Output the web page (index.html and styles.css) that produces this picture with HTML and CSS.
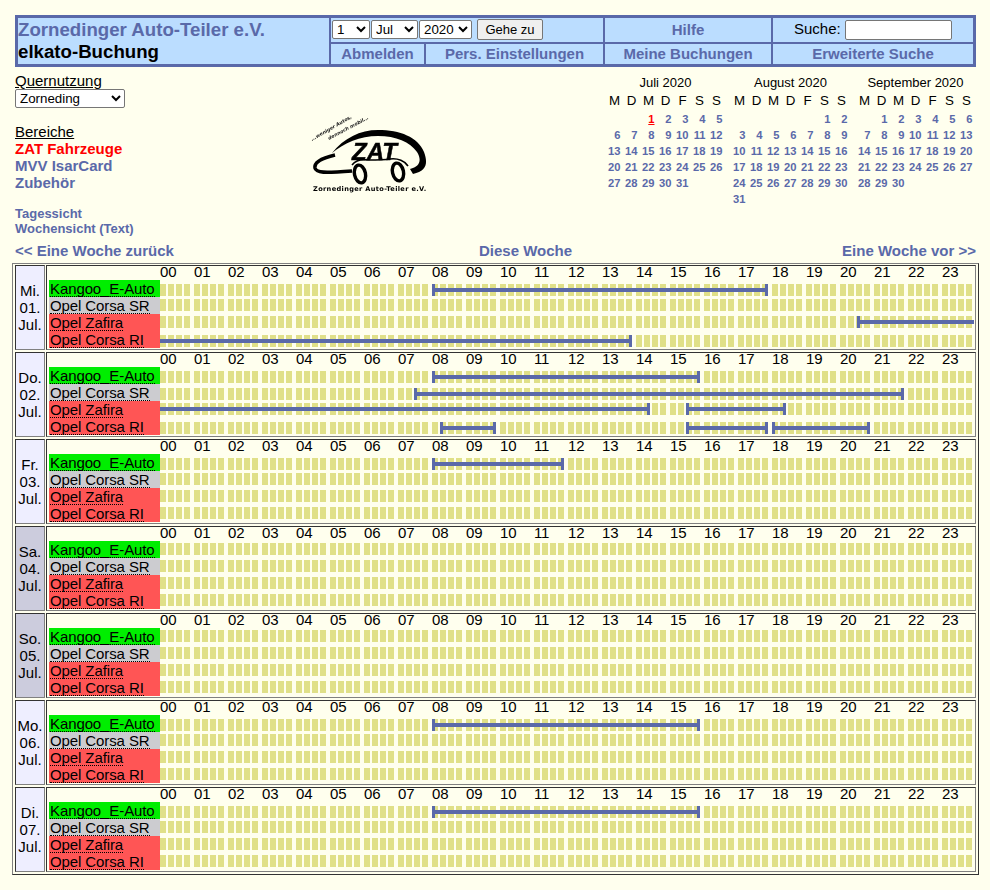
FILE: index.html
```html
<!DOCTYPE html>
<html lang="de">
<head>
<meta charset="utf-8">
<title>elkato-Buchung</title>
<link rel="stylesheet" href="styles.css">
</head>
<body>
<header class="head">
  <div class="brand"><div class="org">Zornedinger Auto-Teiler e.V.</div><div class="app">elkato-Buchung</div></div>
  <form class="goto">
    <select class="sel-d"><option>1</option></select>
    <select class="sel-m"><option>Jul</option></select>
    <select class="sel-y"><option>2020</option></select>
    <button type="button" class="go">Gehe zu</button>
  </form>
  <a class="hl hl-top">Hilfe</a>
  <div class="search"><label>Suche:</label><input type="text" class="q"></div>
  <a class="hl">Abmelden</a>
  <a class="hl">Pers. Einstellungen</a>
  <a class="hl">Meine Buchungen</a>
  <a class="hl">Erweiterte Suche</a>
</header>

<section class="top">
  <div class="side">
    <div class="cap">Quernutzung</div>
    <select class="sel-q"><option>Zorneding</option></select>
    <div class="cap cap-b">Bereiche</div>
    <div class="area active">ZAT Fahrzeuge</div>
    <div class="area">MVV IsarCard</div>
    <div class="area">Zubehör</div>
    <div class="view view-first">Tagessicht</div>
    <div class="view">Wochensicht (Text)</div>
  </div>
  <svg class="logo" viewBox="0 0 120 82" width="120" height="82" aria-label="ZAT Logo">
    <text class="tag" transform="translate(2 27) rotate(-30)">...weniger Autos,</text>
    <text class="tag" transform="translate(19 26) rotate(-28)">dennoch mobil...</text>
    <path class="solid" d="M22 39C34 24 50 16 68 16C90 16 108 23 114 38C118 49 117 57 103 60L100 55C110 53 112 46 107 38C100 28 86 22 68 22C50 22 34 29 22 39Z"/>
    <path class="line thick" d="M25 41C12 44 4 48 5 54C6 59 14 59 42 57"/>
    <path class="line" d="M42 51C46 46 52 45 58 46C66 46 74 46 80 45C88 44 95 47 98 52"/>
    <ellipse class="wheel" cx="50" cy="60" rx="5.5" ry="9" transform="rotate(-12 50 60)"/>
    <ellipse class="wheel" cx="88" cy="58" rx="5.5" ry="9" transform="rotate(-12 88 58)"/>
    <text class="zat" x="42" y="46">ZAT</text>
    <text class="sub" x="3" y="77">Zornedinger Auto-Teiler e.V.</text>
  </svg>
  <div class="cals">
    <div class="cal">
      <div class="mon">Juli 2020</div>
      <div class="wk"><span>M</span><span>D</span><span>M</span><span>D</span><span>F</span><span>S</span><span>S</span></div>
      <div class="dd"><a></a><a></a><a class="today">1</a><a>2</a><a>3</a><a>4</a><a>5</a><a>6</a><a>7</a><a>8</a><a>9</a><a>10</a><a>11</a><a>12</a><a>13</a><a>14</a><a>15</a><a>16</a><a>17</a><a>18</a><a>19</a><a>20</a><a>21</a><a>22</a><a>23</a><a>24</a><a>25</a><a>26</a><a>27</a><a>28</a><a>29</a><a>30</a><a>31</a></div>
    </div>
    <div class="cal">
      <div class="mon">August 2020</div>
      <div class="wk"><span>M</span><span>D</span><span>M</span><span>D</span><span>F</span><span>S</span><span>S</span></div>
      <div class="dd"><a></a><a></a><a></a><a></a><a></a><a>1</a><a>2</a><a>3</a><a>4</a><a>5</a><a>6</a><a>7</a><a>8</a><a>9</a><a>10</a><a>11</a><a>12</a><a>13</a><a>14</a><a>15</a><a>16</a><a>17</a><a>18</a><a>19</a><a>20</a><a>21</a><a>22</a><a>23</a><a>24</a><a>25</a><a>26</a><a>27</a><a>28</a><a>29</a><a>30</a><a>31</a></div>
    </div>
    <div class="cal">
      <div class="mon">September 2020</div>
      <div class="wk"><span>M</span><span>D</span><span>M</span><span>D</span><span>F</span><span>S</span><span>S</span></div>
      <div class="dd"><a></a><a>1</a><a>2</a><a>3</a><a>4</a><a>5</a><a>6</a><a>7</a><a>8</a><a>9</a><a>10</a><a>11</a><a>12</a><a>13</a><a>14</a><a>15</a><a>16</a><a>17</a><a>18</a><a>19</a><a>20</a><a>21</a><a>22</a><a>23</a><a>24</a><a>25</a><a>26</a><a>27</a><a>28</a><a>29</a><a>30</a></div>
    </div>
  </div>
</section>

<nav class="weeknav"><a>&lt;&lt; Eine Woche zurück</a><a>Diese Woche</a><a>Eine Woche vor &gt;&gt;</a></nav>

<main class="week">
  <div class="date"><span>Mi.</span><span>01.</span><span>Jul.</span></div>
  <div class="sched">
    <div class="hours"><span>00</span><span>01</span><span>02</span><span>03</span><span>04</span><span>05</span><span>06</span><span>07</span><span>08</span><span>09</span><span>10</span><span>11</span><span>12</span><span>13</span><span>14</span><span>15</span><span>16</span><span>17</span><span>18</span><span>19</span><span>20</span><span>21</span><span>22</span><span>23</span></div>
    <div class="row"><div class="car green"><span>Kangoo_E-Auto</span></div><div class="slots shift"><i class="bar cl cr" style="left:272px;width:336px"></i></div></div>
    <div class="row"><div class="car grey"><span>Opel Corsa SR</span></div><div class="slots"></div></div>
    <div class="row"><div class="car red"><span>Opel Zafira</span></div><div class="slots"><i class="bar cl" style="left:697px;width:117px"></i></div></div>
    <div class="row"><div class="car red"><span>Opel Corsa RI</span></div><div class="slots shift"><i class="bar cr" style="left:0;width:472px"></i></div></div>
  </div>

  <div class="date"><span>Do.</span><span>02.</span><span>Jul.</span></div>
  <div class="sched">
    <div class="hours"><span>00</span><span>01</span><span>02</span><span>03</span><span>04</span><span>05</span><span>06</span><span>07</span><span>08</span><span>09</span><span>10</span><span>11</span><span>12</span><span>13</span><span>14</span><span>15</span><span>16</span><span>17</span><span>18</span><span>19</span><span>20</span><span>21</span><span>22</span><span>23</span></div>
    <div class="row"><div class="car green"><span>Kangoo_E-Auto</span></div><div class="slots shift"><i class="bar cl cr" style="left:272px;width:268px"></i></div></div>
    <div class="row"><div class="car grey"><span>Opel Corsa SR</span></div><div class="slots shift"><i class="bar cl cr" style="left:254px;width:490px"></i></div></div>
    <div class="row"><div class="car red"><span>Opel Zafira</span></div><div class="slots"><i class="bar cr" style="left:0;width:490px"></i><i class="bar cl cr" style="left:526px;width:100px"></i></div></div>
    <div class="row"><div class="car red"><span>Opel Corsa RI</span></div><div class="slots shift"><i class="bar cl cr" style="left:280px;width:56px"></i><i class="bar cl cr" style="left:526px;width:82px"></i><i class="bar cl cr" style="left:612px;width:98px"></i></div></div>
  </div>

  <div class="date"><span>Fr.</span><span>03.</span><span>Jul.</span></div>
  <div class="sched">
    <div class="hours"><span>00</span><span>01</span><span>02</span><span>03</span><span>04</span><span>05</span><span>06</span><span>07</span><span>08</span><span>09</span><span>10</span><span>11</span><span>12</span><span>13</span><span>14</span><span>15</span><span>16</span><span>17</span><span>18</span><span>19</span><span>20</span><span>21</span><span>22</span><span>23</span></div>
    <div class="row"><div class="car green"><span>Kangoo_E-Auto</span></div><div class="slots shift"><i class="bar cl cr" style="left:272px;width:132px"></i></div></div>
    <div class="row"><div class="car grey"><span>Opel Corsa SR</span></div><div class="slots"></div></div>
    <div class="row"><div class="car red"><span>Opel Zafira</span></div><div class="slots"></div></div>
    <div class="row"><div class="car red"><span>Opel Corsa RI</span></div><div class="slots"></div></div>
  </div>

  <div class="date weekend"><span>Sa.</span><span>04.</span><span>Jul.</span></div>
  <div class="sched">
    <div class="hours"><span>00</span><span>01</span><span>02</span><span>03</span><span>04</span><span>05</span><span>06</span><span>07</span><span>08</span><span>09</span><span>10</span><span>11</span><span>12</span><span>13</span><span>14</span><span>15</span><span>16</span><span>17</span><span>18</span><span>19</span><span>20</span><span>21</span><span>22</span><span>23</span></div>
    <div class="row"><div class="car green"><span>Kangoo_E-Auto</span></div><div class="slots"></div></div>
    <div class="row"><div class="car grey"><span>Opel Corsa SR</span></div><div class="slots"></div></div>
    <div class="row"><div class="car red"><span>Opel Zafira</span></div><div class="slots"></div></div>
    <div class="row"><div class="car red"><span>Opel Corsa RI</span></div><div class="slots"></div></div>
  </div>

  <div class="date weekend"><span>So.</span><span>05.</span><span>Jul.</span></div>
  <div class="sched">
    <div class="hours"><span>00</span><span>01</span><span>02</span><span>03</span><span>04</span><span>05</span><span>06</span><span>07</span><span>08</span><span>09</span><span>10</span><span>11</span><span>12</span><span>13</span><span>14</span><span>15</span><span>16</span><span>17</span><span>18</span><span>19</span><span>20</span><span>21</span><span>22</span><span>23</span></div>
    <div class="row"><div class="car green"><span>Kangoo_E-Auto</span></div><div class="slots"></div></div>
    <div class="row"><div class="car grey"><span>Opel Corsa SR</span></div><div class="slots"></div></div>
    <div class="row"><div class="car red"><span>Opel Zafira</span></div><div class="slots"></div></div>
    <div class="row"><div class="car red"><span>Opel Corsa RI</span></div><div class="slots"></div></div>
  </div>

  <div class="date"><span>Mo.</span><span>06.</span><span>Jul.</span></div>
  <div class="sched">
    <div class="hours"><span>00</span><span>01</span><span>02</span><span>03</span><span>04</span><span>05</span><span>06</span><span>07</span><span>08</span><span>09</span><span>10</span><span>11</span><span>12</span><span>13</span><span>14</span><span>15</span><span>16</span><span>17</span><span>18</span><span>19</span><span>20</span><span>21</span><span>22</span><span>23</span></div>
    <div class="row"><div class="car green"><span>Kangoo_E-Auto</span></div><div class="slots shift"><i class="bar cl cr" style="left:272px;width:268px"></i></div></div>
    <div class="row"><div class="car grey"><span>Opel Corsa SR</span></div><div class="slots"></div></div>
    <div class="row"><div class="car red"><span>Opel Zafira</span></div><div class="slots"></div></div>
    <div class="row"><div class="car red"><span>Opel Corsa RI</span></div><div class="slots"></div></div>
  </div>

  <div class="date"><span>Di.</span><span>07.</span><span>Jul.</span></div>
  <div class="sched">
    <div class="hours"><span>00</span><span>01</span><span>02</span><span>03</span><span>04</span><span>05</span><span>06</span><span>07</span><span>08</span><span>09</span><span>10</span><span>11</span><span>12</span><span>13</span><span>14</span><span>15</span><span>16</span><span>17</span><span>18</span><span>19</span><span>20</span><span>21</span><span>22</span><span>23</span></div>
    <div class="row"><div class="car green"><span>Kangoo_E-Auto</span></div><div class="slots shift"><i class="bar cl cr" style="left:272px;width:268px"></i></div></div>
    <div class="row"><div class="car grey"><span>Opel Corsa SR</span></div><div class="slots"></div></div>
    <div class="row"><div class="car red"><span>Opel Zafira</span></div><div class="slots"></div></div>
    <div class="row"><div class="car red"><span>Opel Corsa RI</span></div><div class="slots"></div></div>
  </div>
</main>
</body>
</html>
```

FILE: styles.css
```css
* { box-sizing: border-box; }
html, body { margin: 0; padding: 0; }
body {
  background: #ffffee;
  color: #000;
  font: 15px/17px "Liberation Sans", Arial, sans-serif;
  padding: 15px 11px 0 12px;
}

/* header */
.head {
  display: grid;
  grid-template-columns: 311px 93px 177px 166px 200px;
  grid-template-rows: 24px 20px;
  gap: 2px;
  margin: 0 0 0 3px;
  width: 961px;
  border: 3px solid #5a69a9;
  background: #5a69a9;
}
.head > * { background: #bbddff; }
.brand { grid-row: 1 / 3; font-weight: bold; font-size: 18.67px; line-height: 22px; padding-top: 1px; }
.org { color: #5a69a9; }
.goto { grid-column: 2 / 4; display: flex; align-items: flex-start; padding: 2px 0 0 1px; gap: 1px; margin: 0; }
.goto select, .sel-q {
  height: 19px;
  font: 13.33px "Liberation Sans", Arial, sans-serif;
  background: #fff;
  border: 1px solid #767676;
  border-radius: 2px;
  padding: 0;
  color: #000;
}
.sel-d { width: 38px; }
.sel-m { width: 47px; }
.sel-y { width: 53px; }
.go {
  height: 21px;
  width: 66px;
  margin: -1px 0 0 4px;
  padding: 0;
  font: 13px "Liberation Sans", Arial, sans-serif;
  background: #efefef;
  border: 1px solid #767676;
  border-radius: 2px;
  color: #000;
}
.hl { color: #5a69a9; font-weight: bold; font-size: 15px; text-align: center; line-height: 20px; }
.hl-top { line-height: 24px; }
.search { display: flex; align-items: flex-start; padding: 2px 0 0 21px; gap: 4px; line-height: 17px; }
.q { width: 107px; height: 20px; background: #fff; border: 1px solid #767676; border-radius: 2px; padding: 0; }

/* upper block */
.top { display: flex; margin: 0 0 0 3px; width: 961px; height: 176px; }
.side { width: 295px; padding-top: 5px; flex: none; }
.cap { text-decoration: underline; line-height: 17px; }
.cap-b { margin-top: 15px; }
.sel-q { display: block; width: 110px; height: 19px; }
.area { color: #5a69a9; font-weight: bold; }
.area.active { color: #ff0000; }
.view { color: #5a69a9; font-weight: bold; font-size: 13px; line-height: 15px; }
.view-first { margin-top: 15px; }
.logo { flex: none; margin-top: 47px; overflow: visible; filter: blur(.25px); }
.logo .tag { font: italic bold 4.8px "DejaVu Sans", sans-serif; fill: #222; }
.logo .zat { font: italic bold 24px "Liberation Sans", sans-serif; fill: #000; stroke: #000; stroke-width: .5; }
.logo .sub { font: bold 6.6px "DejaVu Sans", sans-serif; fill: #000; letter-spacing: .35px; }
.logo .solid { fill: #000; }
.logo .line { fill: none; stroke: #000; stroke-width: 1.6; }
.logo .thick { stroke-width: 3.6; }
.logo .wheel { fill: #ffffee; stroke: #000; stroke-width: 3.4; }

.cals { display: flex; gap: 6px; margin-left: auto; margin-right: 1px; padding-top: 7px; }
.cal { width: 119px; }
.mon { text-align: center; font-size: 13px; line-height: 17px; }
.wk { display: grid; grid-template-columns: repeat(7, 17px); font-size: 13.33px; line-height: 19px; text-align: center; margin-bottom: 1px; }
.dd { display: grid; grid-template-columns: repeat(7, 17px); grid-auto-rows: 16px; font-size: 11.2px; font-weight: bold; line-height: 16px; color: #5a69a9; text-align: right; }
.dd a { padding-right: 2.5px; }
.dd .today { color: #ff0000; text-decoration: underline; }

.weeknav { display: grid; grid-template-columns: 464px 1fr auto; margin: 0 0 0 3px; width: 961px; height: 20px; color: #5a69a9; font-weight: bold; line-height: 16px; }

/* week table */
.week {
  display: grid;
  grid-template-columns: 30px 930px;
  grid-auto-rows: 85px;
  column-gap: 1px;
  row-gap: 2px;
  width: 967px;
  padding: 1px 2px 2px;
  border: 1px solid;
  border-color: #808080 #333 #333 #808080;
}
.date, .sched { border: 1px solid; border-color: #333 #808080 #808080 #333; }
.date { background: #eeeeff; display: flex; flex-direction: column; justify-content: center; align-items: center; padding-bottom: 1px; font-size: 15px; }
.date.weekend { background: #ccccdd; }
.sched { padding-left: 2px; font-size: 15px; letter-spacing: -.1px; }
.hours { display: flex; height: 14px; padding-left: 111px; line-height: 12px; letter-spacing: -.2px; }
.hours span { width: 34px; flex: none; }
.row { display: flex; height: 17px; }
.car { width: 111px; flex: none; padding-left: 1px; white-space: nowrap; }
.car span { display: inline-block; height: 17px; border-bottom: 1px dotted #000; line-height: 17px; }
.green { background: #00ee00; }
.grey { background: #ccccd0; }
.red { background: #ff5555; }
.slots {
  position: relative;
  flex: 1;
  background: repeating-linear-gradient(90deg,
    #e0e088 0 6px, transparent 6px 8px,
    #e0e088 8px 14px, transparent 14px 16px,
    #e0e088 16px 22px, transparent 22px 24px,
    #e0e088 24px 30px, transparent 30px 34px) 0 2px / 100% 12px no-repeat;
}
.slots.shift { background-position: 0 4px; }
.bar {
  position: absolute;
  top: 2px;
  height: 12px;
  background: linear-gradient(#5a69a9, #5a69a9) center / 100% 4px no-repeat;
}
.slots.shift .bar { top: 4px; }
.bar.cl { border-left: 3px solid #5a69a9; }
.bar.cr { border-right: 3px solid #5a69a9; }
```
